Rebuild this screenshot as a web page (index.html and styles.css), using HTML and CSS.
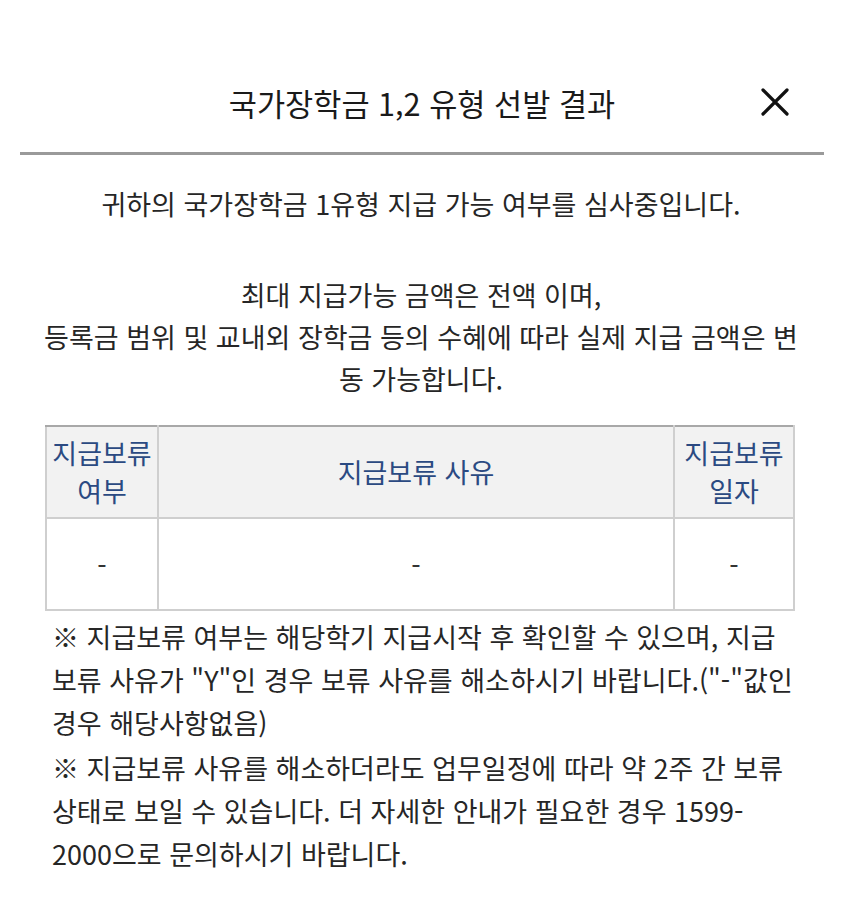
FILE: index.html
```html
<!DOCTYPE html>
<html lang="ko">
<head>
<meta charset="utf-8">
<link rel="stylesheet" href="styles.css">
</head>
<body>
<div class="modal">
  <div class="header">
    <h1 class="title">국가장학금 1,2 유형 선발 결과</h1>
    <button class="close" aria-label="닫기">
      <svg width="30" height="30" viewBox="0 0 30 30"><path d="M3 3 L27 27 M27 3 L3 27" stroke="#111" stroke-width="3.2" stroke-linecap="round" fill="none"/></svg>
    </button>
  </div>
  <div class="body">
    <p class="msg">귀하의 국가장학금 1유형 지급 가능 여부를 심사중입니다.</p>
    <p class="msg info">최대 지급가능 금액은 전액 이며,<br>등록금 범위 및 교내외 장학금 등의 수혜에 따라 실제 지급 금액은 변동 가능합니다.</p>
    <table class="tbl">
      <colgroup><col class="c1"><col class="c2"><col class="c3"></colgroup>
      <thead>
        <tr><th>지급보류<br>여부</th><th>지급보류 사유</th><th>지급보류<br>일자</th></tr>
      </thead>
      <tbody>
        <tr><td>-</td><td>-</td><td>-</td></tr>
      </tbody>
    </table>
    <div class="notes">
      <p>※ 지급보류 여부는 해당학기 지급시작 후 확인할 수 있으며, 지급 보류 사유가 "Y"인 경우 보류 사유를 해소하시기 바랍니다.("-"값인 경우 해당사항없음)</p>
      <p>※ 지급보류 사유를 해소하더라도 업무일정에 따라 약 2주 간 보류 상태로 보일 수 있습니다. 더 자세한 안내가 필요한 경우 1599-<wbr>2000으로 문의하시기 바랍니다.</p>
    </div>
  </div>
</div>
</body>
</html>
```
FILE: styles.css
```css
* { box-sizing: border-box; }
html, body { margin: 0; padding: 0; background: #fff; }
body {
  font-family: "Noto Sans CJK KR", "Noto Sans", sans-serif;
  color: #222;
}
.modal { width: 844px; }
.header {
  position: relative;
  margin: 0 20px 0 20px;
  height: 155px;
  border-bottom: 3px solid #9a9a9a;
  display: flex;
  align-items: flex-start;
  justify-content: center;
}
.title {
  margin: 80px 0 0 0;
  font-size: 30.6px;
  font-weight: 400;
  line-height: 46px;
  color: #1a1a1a;
}
.close {
  position: absolute;
  right: 34px;
  top: 87px;
  width: 30px;
  height: 30px;
  padding: 0;
  border: 0;
  background: none;
}
.close svg { display: block; }
.body { padding: 0 47px 0 45px; }
.msg {
  margin: 0;
  text-align: center;
  font-size: 27px;
  line-height: 42px;
  color: #262626;
}
.msg:first-child { margin-top: 28px; }
.info {
  margin: 49px -6px 0 -6px;
  word-break: break-all;
}
.tbl {
  width: 750px;
  margin-top: 25px;
  border-collapse: collapse;
  table-layout: fixed;
  font-size: 27px;
}
.c1 { width: 112px; }
.c3 { width: 120px; }
.tbl th, .tbl td {
  border: 2px solid #cfcfcf;
  text-align: center;
  font-weight: 400;
  padding: 0;
}
.tbl th {
  background: #f2f2f2;
  color: #2b4a82;
  height: 92px;
  line-height: 38px;
  border-top-color: #a8a8a8;
}
.tbl td {
  height: 92px;
  color: #333;
}
.notes { padding: 4px 0 0 7px; }
.notes p {
  margin: 0;
  font-size: 27px;
  line-height: 43px;
  color: #262626;
}
.notes p + p { margin-top: 2px; }
```
